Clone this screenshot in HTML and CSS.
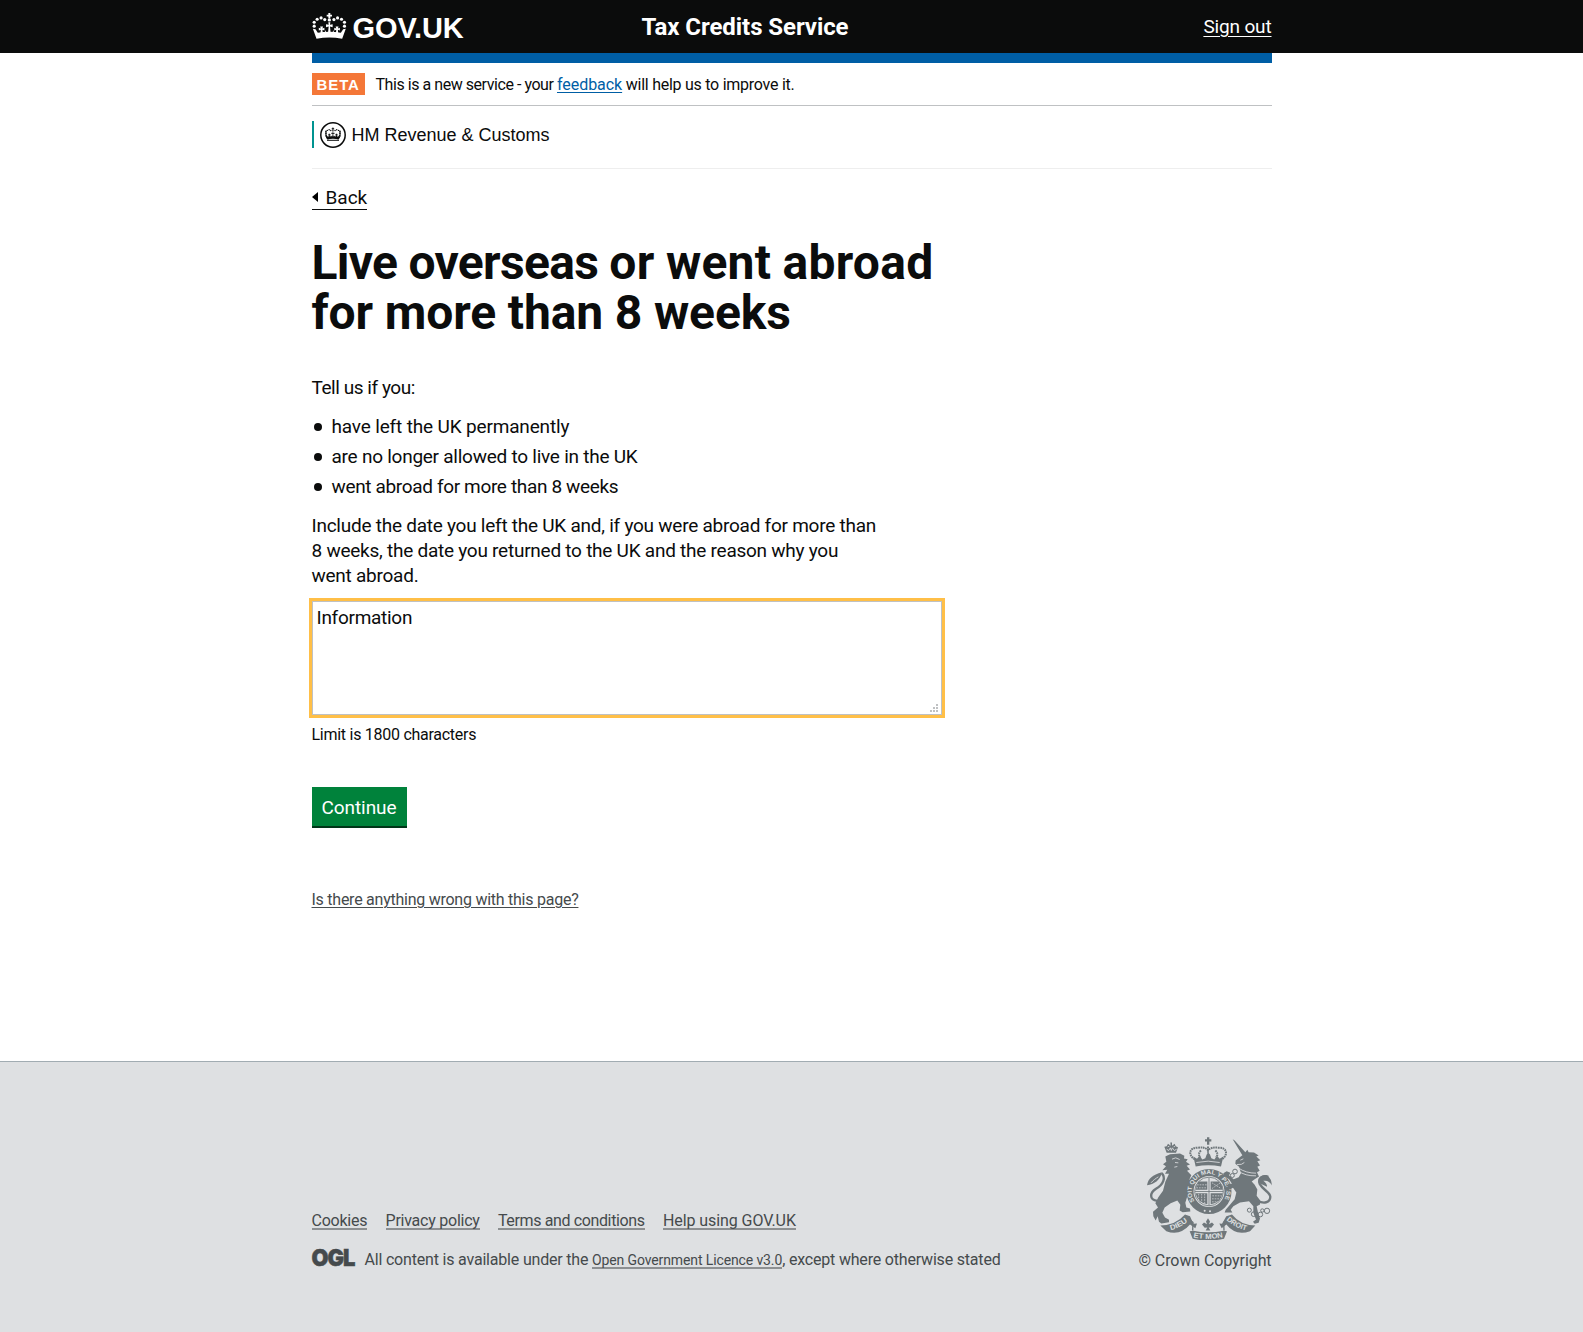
FILE: index.html
```
<!DOCTYPE html>
<html lang="en">
<head>
<meta charset="utf-8">
<title>Tax Credits Service</title>
<link rel="stylesheet" href="styles.css">
</head>
<body>
<svg width="0" height="0" class="defs" aria-hidden="true">
  <symbol id="crown" viewBox="36 38 105 79">
    <path d="M85 38h6v5h5v6h-5v5h-6v-5h-5v-6h5z"/>
    <circle cx="88" cy="59" r="5"/>
    <circle cx="74" cy="58" r="4.8"/><circle cx="63" cy="53" r="4.8"/><circle cx="51" cy="57" r="4.8"/><circle cx="42" cy="66" r="4.8"/><circle cx="42" cy="78" r="4.8"/>
    <circle cx="102" cy="58" r="4.8"/><circle cx="113" cy="53" r="4.8"/><circle cx="125" cy="57" r="4.8"/><circle cx="134" cy="66" r="4.8"/><circle cx="134" cy="78" r="4.8"/>
    <path d="M38 86L46 87L53 98Q88 92 123 98L130 87L138 86L127 116Q88 109 49 116z"/>
    <path d="M85 66h6l-1 8l8-2v9l-8-2l2 20h-8l2-20l-8 2v-9l8 2z"/>
    <path d="M60 79h9l-2 6l6-2v8l-6-2l1 11h-7l1-11l-6 2v-8l6 2zM107 79h9l-2 6l6-2v8l-6-2l1 11h-7l1-11l-6 2v-8l6 2zM76 90l3 10h-6zM100 90l3 10h-6z"/>
  </symbol>
</svg>

<header class="site-header">
  <div class="container site-header-row">
    <a class="logo" href="#"><svg class="logo-crown"><use href="#crown"/></svg><span>GOV.UK</span></a>
    <a class="service" href="#">Tax Credits Service</a>
    <a class="sign-out" href="#">Sign out</a>
  </div>
</header>

<main class="container">
  <div class="blue-bar"></div>
  <div class="phase-banner">
    <strong class="phase-tag">BETA</strong>
    <span><span class="tight">This is a new service - your </span><a href="#">feedback</a> will help us to improve it.</span>
  </div>
  <div class="organisation">
    <div class="organisation-logo">
      <svg class="organisation-crest" viewBox="0 0 26 26"><circle cx="13" cy="13" r="12.2" fill="none" stroke="#0b0c0c" stroke-width="1.5"/><use href="#crown" x="5" y="4" width="16" height="15"/><path d="M6 8.5v6l2 3M20 8.5v6l-2 3M7 18.3h12" fill="none" stroke="#0b0c0c"/></svg>
      <span>HM Revenue &amp; Customs</span>
    </div>
  </div>

  <a class="back" href="#"><svg viewBox="0 0 6 10"><path d="M6 0v10L0 5z"/></svg>Back</a>

  <h1><span class="narrow">Live overseas </span><span class="wide">or went abroad</span><br>for more than 8 weeks</h1>

  <div class="copy">
    <p class="lead">Tell us if you:</p>
    <ul>
      <li class="loose">have left the UK permanently</li>
      <li>are no longer allowed to live in the UK</li>
      <li class="tight">went abroad for more than 8 weeks</li>
    </ul>
    <p>Include the date you left the UK and, if you were abroad for more than 8 weeks, the date you returned to the UK and the reason why you went abroad.</p>
  </div>

  <div class="field">
    <textarea aria-label="Information">Information</textarea>
    <svg class="grip" viewBox="0 0 8 8"><path d="M6 0h2v2h-2zM3 3h2v2h-2zM6 3h2v2h-2zM0 6h2v2h-2zM3 6h2v2h-2zM6 6h2v2h-2z"/></svg>
  </div>
  <p class="hint">Limit is 1800 characters</p>
  <button class="button">Continue</button>
  <div class="report"><a href="#">Is there anything wrong with this page?</a></div>
</main>

<footer class="site-footer">
  <div class="container site-footer-row">
    <div class="footer-meta">
      <nav class="footer-links"><a href="#">Cookies</a><a href="#">Privacy policy</a><a class="terms" href="#">Terms and conditions</a><a class="help" href="#">Help using GOV.UK</a></nav>
      <div class="licence">
        <svg class="ogl" viewBox="0 0 43 18"><text x="-0.5" y="17" textLength="43" lengthAdjust="spacingAndGlyphs">OGL</text></svg>
        <span>All content is available under the <a href="#">Open Government Licence v3.0</a>, except where otherwise stated</span>
      </div>
    </div>
    <div class="copyright">
      <svg class="arms" viewBox="51 50 375 308">
        <defs>
          <path id="garter" d="M194 242A52 52 0 1 1 280 242"/>
          <path id="dieu" d="M122 329Q152 322 177 300"/>
          <path id="mon" d="M190 351Q234 360 281 350"/>
          <path id="droit" d="M289 298Q314 322 352 331"/>
        </defs>
        <!-- lion -->
        <path d="M106 108L120 101L150 99L163 106L162 114L173 116L168 124L180 132L170 136L180 147L171 151L184 164L178 177L188 183L178 200L181 214L171 230L166 247L169 261L180 264L181 273L158 275L149 270L151 253L142 240L122 248L104 261L97 277L105 291L117 298L117 305L94 309L87 304L83 287L77 300L70 287L69 274L84 261L76 248L85 230L99 211L106 184L117 160L105 160L112 148L97 149L108 137L99 131L109 124z"/>
        <path d="M126 116l11 -4l12 5M135 126l10 1M133 140l9 -2" class="line-light"/>
        <path d="M82 241C57 238 59 217 78 205C101 191 108 171 95 158" class="line w6"/>
        <path d="M51 194C55 172 67 164 96 155C91 178 72 192 51 194z"/>
        <path d="M63 187C70 179 77 174 85 169" class="line-light"/>
        <path d="M110 97L103 79L110 77L114 70L122 76L121 66H126L126 76L134 70L137 77L144 80L138 97z"/>
        <path d="M110 86l6 4l5-8l3 8l3-8l6 8l7-4M113 79l5-2M131 79l4-1" class="line-light"/>
        <!-- crown -->
        <path d="M231 50h7v6h6v7h-6v10h-7v-10h-6v-7h6z"/>
        <g class="line w4 beads"><path d="M194 117C171 100 181 80 202 82Q224 78 234 89Q246 78 267 82C289 80 297 102 275 117"/><path d="M234 78V103M213 90Q202 100 211 111M256 90Q267 100 258 111"/></g>
        <path d="M190 108l11 7l8-9l8 11l9-4l4 -11l5 -5l5 5l4 11l9 4l8-11l8 9l11-7l-7 30q-38-8-76 0z"/>
        <path d="M199 126q36-8 70 0" class="line-light"/>
        <!-- garter and shield -->
        <circle cx="237" cy="213" r="57" class="line w17"/>
        <circle cx="237" cy="213" r="43" class="line w2"/>
        <path d="M205 183H232V208H197Q197 194 205 183zM242 183H267Q277 192 278 208H242zM197 218H232V251Q202 246 197 218zM242 218H278Q273 247 242 251z"/>
        <path d="M201 193h29M199 202h31M246 187l27 17M246 204l25-17M247 226h28M246 235h27M246 244h19M206 220v24M215 220v27M224 220v29" class="line-light dashes"/>
        <path d="M237 172V256M195 213H280" class="line w2"/>
        <text class="garter-text"><textPath href="#garter" textLength="218" lengthAdjust="spacingAndGlyphs">SOIT QUI MAL Y PENSE</textPath></text>
        <circle cx="224" cy="271" r="3" class="light"/><circle cx="240" cy="272" r="3" class="light"/>
        <!-- unicorn -->
        <path d="M308 56L314 60L346 95L352 88L356 95L372 96L386 105L379 108L391 119L382 122L390 135L382 139L389 151L381 155L387 168L374 176L365 183L374 193L382 207L380 226L390 239L390 252L380 257L384 276L390 294L386 307L374 310L369 304L378 297L370 277L370 257L357 242L330 246L310 257L302 268L307 276H284L287 268L300 253L314 236L319 216L309 202L292 211L282 203L293 198L298 190L306 190L297 176L282 166L280 158L290 152L301 157L297 165L311 176L326 170L333 158L327 139L316 130L317 120L337 104z"/>
        <path d="M331 119l9 -4M321 132Q336 134 343 126M324 151Q346 167 378 166M326 143Q348 158 378 158" class="line-light"/>
        <path d="M382 239C401 252 421 246 421 229C421 215 400 210 389 190C383 173 397 162 415 169" class="line w6"/>
        <path d="M386 187Q386 162 411 164Q425 174 426 195Q417 178 400 181Q412 190 411 199z"/>
        <g class="line w3"><circle cx="315" cy="153" r="7"/><circle cx="307" cy="165" r="6"/><circle cx="358" cy="269" r="6"/><circle cx="371" cy="281" r="7"/><circle cx="391" cy="282" r="7"/><circle cx="411" cy="271" r="8"/><circle cx="397" cy="270" r="5"/></g>
        <!-- ribbon -->
        <path d="M91 315Q137 314 165 282L180 287L190 310L201 309L196 323L180 312Q150 347 109 332z"/>
        <path d="M376 315Q331 314 306 282L289 287L276 310L268 309L275 323L289 312Q317 347 360 332z"/>
        <path d="M179 332L190 331Q234 340 281 331L291 332L282 355Q234 365 188 355z"/>
        <path d="M170 306Q177 293 189 306L188 330M299 306Q291 293 281 306L282 330" class="line w4"/>
        <path d="M234 293l6 10l-3 8l9-5l6 6l-8 10l-8-1l5 9h-14l5-9l-8 1l-8-10l6-6l9 5l-3-8z"/>
        <text class="motto"><textPath href="#dieu" textLength="58" lengthAdjust="spacingAndGlyphs">DIEU</textPath></text>
        <text class="motto"><textPath href="#mon" textLength="90" lengthAdjust="spacingAndGlyphs">ET MON</textPath></text>
        <text class="motto"><textPath href="#droit" textLength="68" lengthAdjust="spacingAndGlyphs">DROIT</textPath></text>
      </svg>
      <a href="#">© Crown Copyright</a>
    </div>
  </div>
</footer>
</body>
</html>
```
FILE: styles.css
```
* { box-sizing: border-box; }
body {
  margin: 0;
  min-height: 1332px;
  display: flex;
  flex-direction: column;
  background: #fff;
  color: #0b0c0c;
  font: 19px/25px Roboto, "Liberation Sans", sans-serif;
  letter-spacing: -0.25px;
}
p, h1, ul { margin: 0; padding: 0; }
.defs { position: absolute; }
.container { width: 960px; margin: 0 auto; }

.site-header { height: 53px; background: #0b0c0c; }
.site-header-row { height: 53px; display: grid; grid-template-columns: 330px 1fr auto; align-items: center; }
.site-header a { color: #fff; text-decoration: none; }
.logo { display: flex; align-items: center; gap: 6px; font: bold 29px/30px "Liberation Sans", Arial, sans-serif; letter-spacing: -0.1px; }
.logo span { padding-top: 3px; }
.logo-crown { width: 35px; height: 26px; margin-bottom: 1px; fill: #fff; }
.service { font-size: 24px; font-weight: 700; line-height: 30px; letter-spacing: -0.07px; }
.site-header .sign-out { padding-bottom: 1px; letter-spacing: -0.15px; text-decoration: underline 1px; text-underline-offset: 3px; }

.blue-bar { height: 10px; background: #005ea5; }
.phase-banner {
  height: 43px;
  display: flex;
  align-items: center;
  gap: 11px;
  border-bottom: 1px solid #bfc1c3;
  font-size: 16px;
  line-height: 20px;
  letter-spacing: -0.26px;
}
.phase-banner > span { padding-top: 2px; }
.phase-banner .tight { letter-spacing: -0.45px; }
.phase-banner a { color: #005ea5; letter-spacing: -0.05px; text-underline-offset: 2px; text-decoration-thickness: 1px; }
.phase-tag { width: 53px; height: 22px; padding-left: 5px; background: #f47738; color: #fff; font: bold 15px/24px "Liberation Sans", Arial, sans-serif; letter-spacing: 0.9px; }

.organisation { height: 63px; padding-top: 15px; border-bottom: 1px solid #eee; }
.organisation-logo { height: 27px; padding-left: 6px; display: flex; align-items: center; gap: 6px; border-left: 2px solid #009390; font: 18px/27px "Liberation Sans", Arial, sans-serif; letter-spacing: 0; }
.organisation-logo span { padding-top: 1px; }
.organisation-crest { width: 26px; height: 26px; fill: #0b0c0c; }

.back { display: flex; width: 55px; align-items: center; gap: 8px; height: 25px; margin-top: 16px; border-bottom: 1px solid #0b0c0c; color: #0b0c0c; text-decoration: none; letter-spacing: 0; }
.back svg { width: 6px; height: 10px; flex: none; }

h1 { margin-top: 28px; font-size: 48px; line-height: 50px; font-weight: 700; letter-spacing: -0.13px; }
h1 .narrow { letter-spacing: -0.7px; }
h1 .wide { letter-spacing: 0.25px; word-spacing: -0.8px; }
.copy { width: 570px; margin-top: 37px; }
.copy .lead { letter-spacing: -0.45px; }
.copy ul { margin: 14px 0; padding-left: 20px; list-style: none; }
.copy li { display: flex; align-items: center; }
.copy li + li { margin-top: 5px; }
.copy li::before { content: ""; width: 8px; height: 8px; margin-left: -17.5px; margin-right: 9.5px; border-radius: 50%; background: #0b0c0c; }
.copy .loose { letter-spacing: -0.16px; }
.copy .tight { letter-spacing: -0.35px; }

.field { position: relative; width: 630px; height: 114px; margin-top: 13px; }
.field textarea { display: block; width: 100%; height: 100%; padding: 3px 4px; border: 1px solid #bfc1c3; outline: 3px solid #ffbf47; resize: none; border-radius: 0; color: inherit; font: inherit; letter-spacing: -0.28px; }
.grip { position: absolute; right: 4px; bottom: 3px; width: 8px; height: 8px; fill: #bfc1c3; }
.hint { margin-top: 10px; font-size: 16px; line-height: 20px; letter-spacing: -0.27px; }
.button { display: block; width: 95px; height: 41px; margin-top: 42px; padding: 2px 0 0; border: 0; border-bottom: 2px solid #003618; background: #00823b; color: #fff; font: 19px/37px Roboto, "Liberation Sans", sans-serif; letter-spacing: -0.07px; }
.report { height: 20px; margin-top: 62px; font-size: 16px; line-height: 20px; letter-spacing: -0.25px; }
.report a { color: #454a4c; text-underline-offset: 2px; text-decoration-thickness: 1px; }

.site-footer { margin-top: 151px; height: 271px; padding-top: 75px; border-top: 1px solid #a1acb2; background: #dee0e2; color: #454a4c; font-size: 16px; line-height: 20px; }
.site-footer-row { display: flex; justify-content: space-between; align-items: flex-end; }
.site-footer a { color: #454a4c; text-decoration: none; }
.footer-links { display: flex; gap: 18.3px; letter-spacing: -0.24px; }
.footer-links a { height: 19px; border-bottom: 2px solid #8d9092; }
.footer-links .terms { letter-spacing: -0.37px; }
.footer-links .help { letter-spacing: -0.08px; }
.licence { display: flex; gap: 10px; margin: 20px 0 1px; letter-spacing: -0.19px; }
.licence a { display: inline-block; height: 19px; border-bottom: 2px solid #8d9092; font-size: 14px; letter-spacing: -0.12px; }
.ogl { width: 43px; height: 18px; margin-top: -1px; overflow: visible; }
.ogl text { font: 900 23px Inter, sans-serif; letter-spacing: -1px; fill: #454a4c; stroke: #454a4c; stroke-width: 0.5px; }
.copyright { display: flex; flex-direction: column; align-items: flex-end; letter-spacing: -0.09px; }
.arms { width: 125px; height: 103px; margin-bottom: 11px; fill: #6f777b; }
.arms .line { fill: none; stroke: #6f777b; }
.arms .w2 { stroke-width: 2.5; }
.arms .w3 { stroke-width: 3; }
.arms .w4 { stroke-width: 4; }
.arms .w6 { stroke-width: 7; }
.arms .w17 { stroke-width: 21; }
.arms .beads { stroke-width: 6; stroke-dasharray: 5 2; }
.arms .light { fill: #dee0e2; }
.arms .line-light { fill: none; stroke: #dee0e2; stroke-width: 2.5; }
.arms .dashes { stroke-dasharray: 5 3; stroke-width: 2; }
.arms text { font-family: "Liberation Sans", Arial, sans-serif; font-weight: bold; fill: #dee0e2; letter-spacing: 0; }
.arms .garter-text { font-size: 18px; }
.arms .motto { font-size: 22px; }
```
